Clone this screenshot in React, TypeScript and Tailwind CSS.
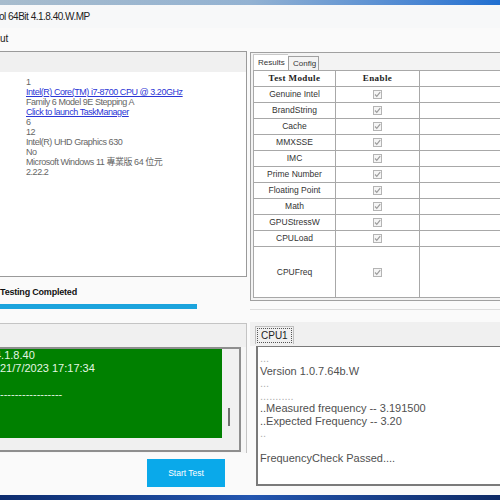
import React from "react";

const info = [
  { t: "1" },
  { t: "Intel(R) Core(TM) i7-8700 CPU @ 3.20GHz", link: true },
  { t: "Family 6 Model 9E Stepping A" },
  { t: "Click to launch TaskManager", link: true },
  { t: "6" },
  { t: "12" },
  { t: "Intel(R) UHD Graphics 630" },
  { t: "No" },
  { t: "Microsoft Windows 11 專業版 64 位元" },
  { t: "2.22.2" },
];

const modules = [
  "Genuine Intel",
  "BrandString",
  "Cache",
  "MMXSSE",
  "IMC",
  "Prime Number",
  "Floating Point",
  "Math",
  "GPUStressW",
  "CPULoad",
];

const log = [
  "...",
  "Version 1.0.7.64b.W",
  "...",
  "...........",
  "..Measured frequency -- 3.191500",
  "..Expected Frequency -- 3.20",
  "..",
  "",
  "FrequencyCheck Passed....",
];

function Check() {
  return (
    <svg width="9" height="9" viewBox="0 0 9 9" className="block">
      <rect x="0.5" y="0.5" width="8" height="8" fill="#f5f5f5" stroke="#b4b4b4" />
      <path d="M2 4.5 L3.8 6.4 L7.2 2.2" fill="none" stroke="#9c9c9c" strokeWidth="1.2" />
    </svg>
  );
}

function Row({ name, tall }: { name: string; tall?: boolean }) {
  return (
    <div className={`flex border-b border-[#a8a8a8] ${tall ? "h-[51px]" : "h-[16px]"}`}>
      <div className="flex w-[82px] items-center justify-center border-r border-[#a8a8a8] text-[8.5px] text-[#333]">
        {name}
      </div>
      <div className="flex w-[84px] items-center justify-center border-r border-[#a8a8a8]">
        <Check />
      </div>
      <div className="flex-1" />
    </div>
  );
}

export default function App() {
  return (
    <div
      className="flex h-[500px] w-[500px] flex-col overflow-hidden bg-[#fafafa]"
      style={{ fontFamily: '"Liberation Sans", Arial, sans-serif' }}
    >
      {/* desktop strip */}
      <div className="h-[5px] shrink-0 bg-gradient-to-r from-[#a7bccd] via-[#93b2d2] to-[#1f6fd1]" />

      {/* title */}
      <div className="flex h-[23px] shrink-0 items-center bg-[#f7f8f9] text-[10px] tracking-[-0.5px] text-[#222]">
        <span className="-ml-[1px]">ol 64Bit 4.1.8.40.W.MP</span>
      </div>

      {/* menu */}
      <div className="flex h-[20px] shrink-0 items-center text-[10px] text-[#222]">
        <span>ut</span>
      </div>

      <div className="flex flex-1">
        {/* left column */}
        <div className="flex w-[247px] flex-col">
          <div className="mt-[3px] h-[226px] border-t border-r border-b border-[#9a9a9a] bg-white">
            <div className="h-[20px] bg-[#f0f0f0]" />
            <div className="pl-[26px] pt-[5px] text-[9px] leading-[10px] tracking-[-0.45px] text-[#666]">
              {info.map((l, i) => (
                <div
                  key={i}
                  className={l.link ? "text-[#2b35d6] underline" : ""}
                  style={i === 8 ? { fontFamily: '"Liberation Sans", "Noto Sans CJK TC", sans-serif' } : undefined}
                >
                  {l.t}
                </div>
              ))}
            </div>
          </div>

          <div className="mt-[9px] text-[9px] font-bold leading-[13px] tracking-[-0.2px] text-[#111]">
            Testing Completed
          </div>
          <div className="mt-[5px] h-[5px] w-[197px] bg-[#1ca4dd]" />

          <div className="mt-[14px] h-[130px] border-t border-r border-[#c4c4c4] bg-[#f6f6f6]">
            <div className="h-[23px] bg-[#f0f0f0]" />
            <div className="w-[241px] border-t-2 border-r-2 border-b-2 border-[#8e8e8e] bg-[#f0f0f0]">
              <div className="flex h-[89px]">
                <div className="w-[222px] overflow-hidden bg-[#008000] text-[11px] leading-[13px] text-[#e4f6e4]">
                  <div className="-ml-[5px] whitespace-nowrap">4.1.8.40</div>
                  <div className="whitespace-nowrap">21/7/2023 17:17:34</div>
                  <div>&nbsp;</div>
                  <div className="whitespace-nowrap">-----------------</div>
                </div>
                <div className="relative flex-1">
                  <div className="absolute left-[6px] top-[59px] h-[18px] w-[2px] bg-[#707070]" />
                </div>
              </div>
              <div className="h-[12px]" />
            </div>
          </div>

          <button className="ml-[147px] mt-[6px] flex h-[28px] w-[78px] items-center justify-center bg-[#0aa9ea] text-[8.5px] text-white">
            Start Test
          </button>
        </div>

        {/* right column */}
        <div className="ml-[3px] flex flex-1 flex-col">
          <div className="mt-[4px] h-[249px] border-t border-l border-b border-[#a0a0a0] bg-[#f3f3f3]">
            <div className="flex h-[17px] items-end pl-[2px] text-[8px] text-[#333]">
              <div className="flex h-[16px] w-[35px] items-center border-l border-t border-[#c8c8c8] bg-white pl-[4px]">
                Results
              </div>
              <div className="flex h-[14px] w-[31px] items-center border-x border-t border-[#a0a0a0] pl-[4px]">
                Config
              </div>
            </div>
            <div className="ml-[2px] border-t border-l border-[#a8a8a8] bg-white">
              <div className="flex h-[16px] border-b border-[#a8a8a8]">
                <div
                  className="flex w-[82px] items-center justify-center border-r border-[#a8a8a8] text-[9px] font-bold tracking-[0.4px] text-[#222]"
                  style={{ fontFamily: '"Liberation Serif", serif' }}
                >
                  Test Module
                </div>
                <div
                  className="flex w-[84px] items-center justify-center border-r border-[#a8a8a8] text-[9px] font-bold tracking-[0.4px] text-[#222]"
                  style={{ fontFamily: '"Liberation Serif", serif' }}
                >
                  Enable
                </div>
                <div className="flex-1" />
              </div>
              {modules.map((m) => (
                <Row key={m} name={m} />
              ))}
              <Row name="CPUFreq" tall />
            </div>
          </div>
          <div className="h-[9px] border-b border-[#dcdcdc]" />

          <div className="mt-[12px] flex h-[24px] items-end bg-[#f0f0f0] pl-[5px]">
            <div className="mb-[2px] flex h-[18px] items-center border-t border-x border-[#c0c0c0] px-[1px]">
              <div className="flex h-[15px] items-center border border-dotted border-[#555] px-[3px] text-[10px] text-[#222]">
                CPU1
              </div>
            </div>
          </div>
          <div className="ml-[6px] h-[140px] border-t border-l-2 border-b-2 border-[#7a7a7a] bg-white pl-[2px] pt-[5px] text-[11px] leading-[12.5px] text-[#505050]">
            {log.map((l, i) => (
              <div key={i} className={/^\.+$/.test(l) ? "text-[#b0b0b0]" : ""}>
                {l || "\u00a0"}
              </div>
            ))}
          </div>
        </div>
      </div>

      {/* taskbar */}
      <div className="h-[5px] shrink-0 bg-gradient-to-r from-[#0d2c6e] via-[#2356b0] to-[#0e2a66]" />
    </div>
  );
}
